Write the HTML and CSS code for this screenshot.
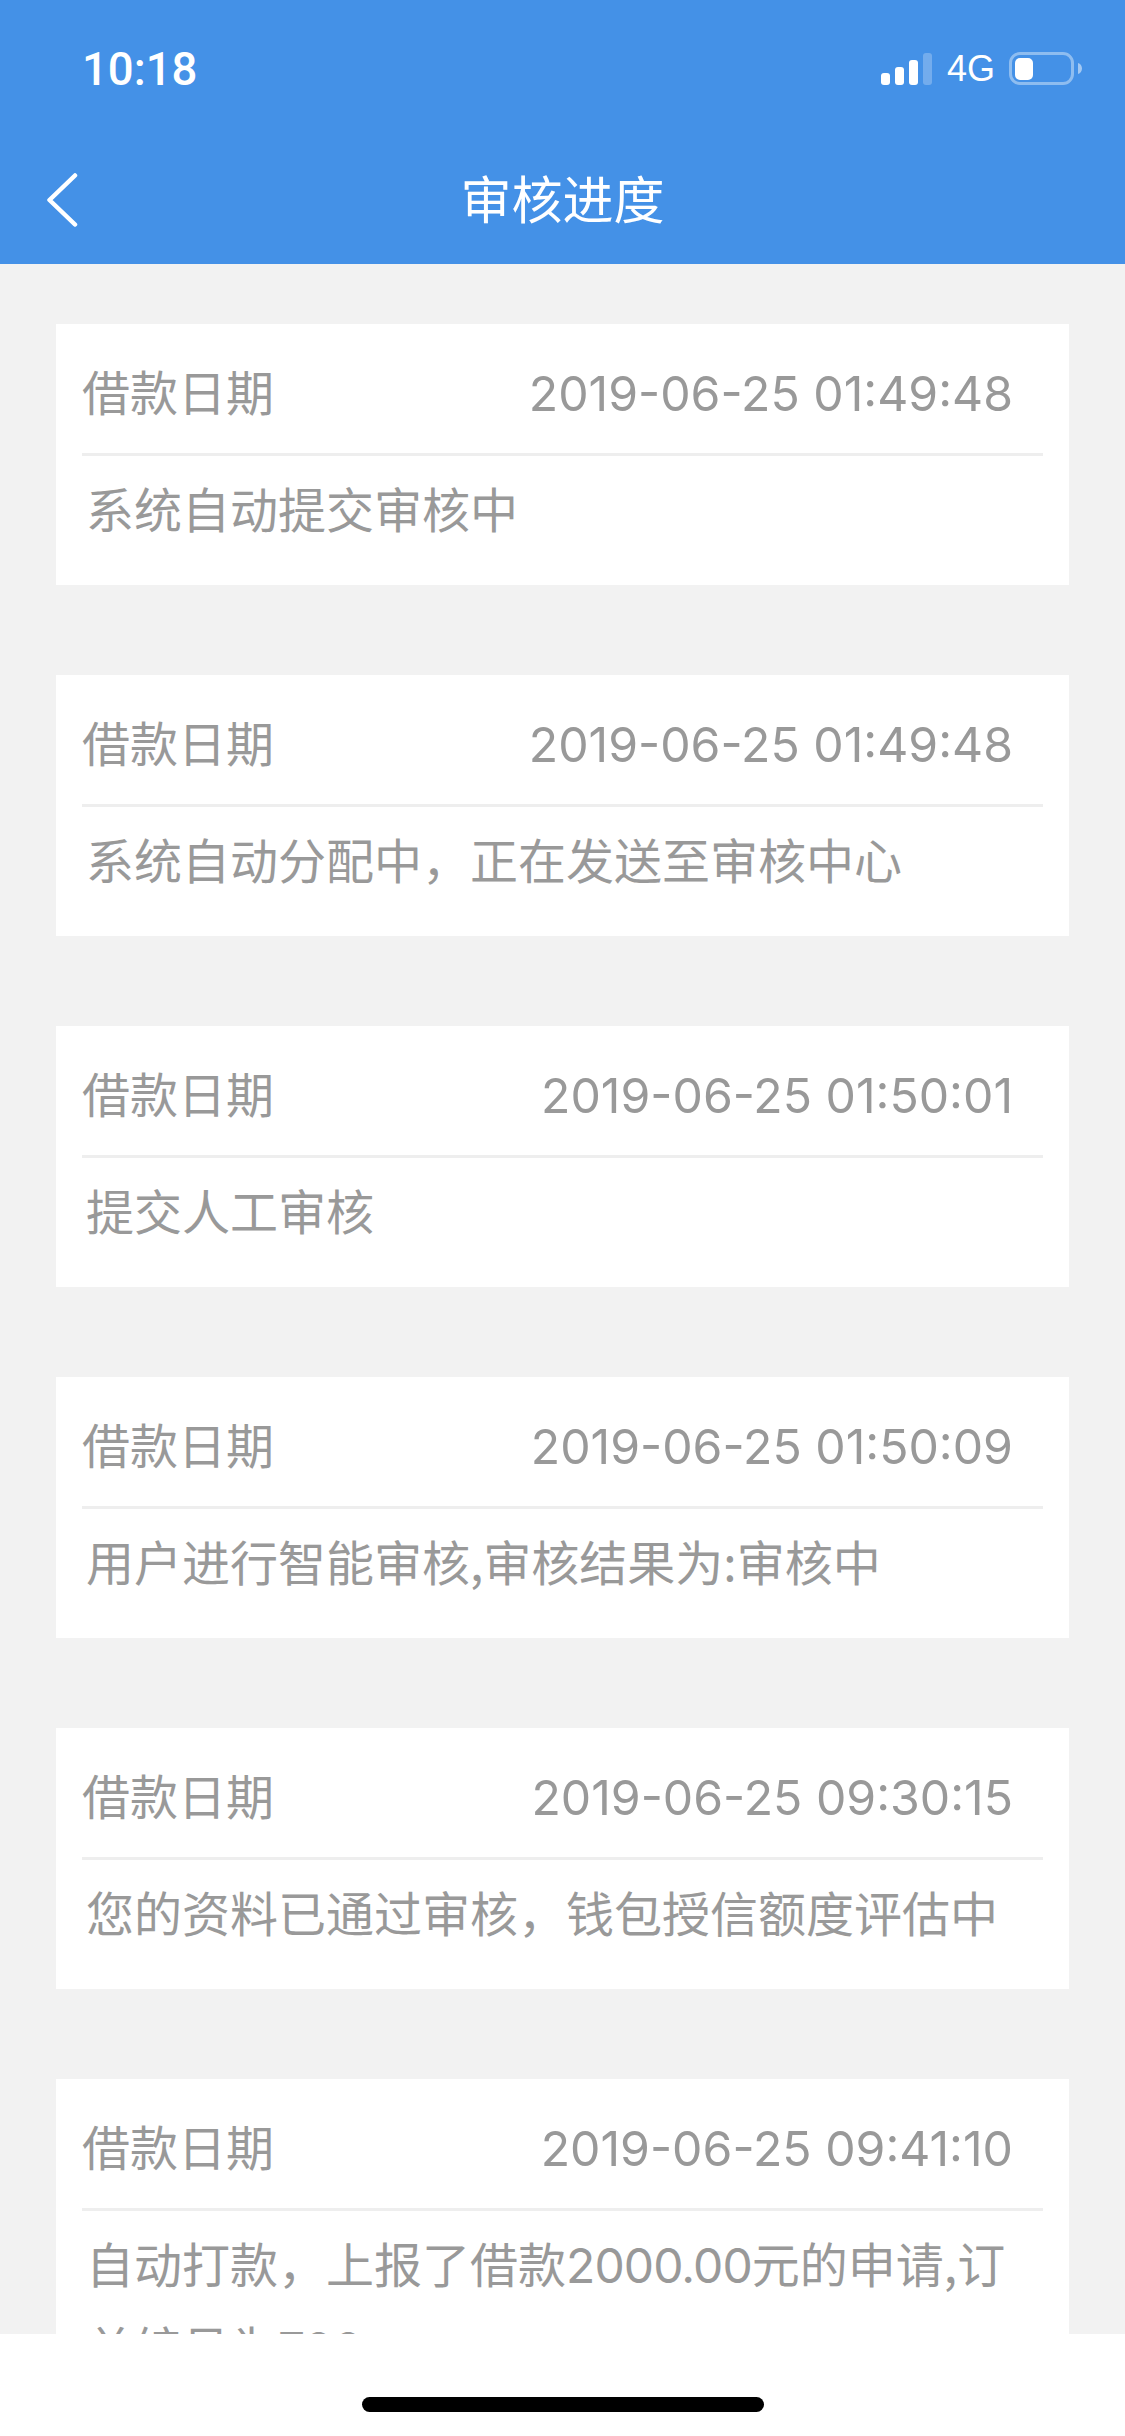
FILE: index.html
```html
<!DOCTYPE html>
<html lang="zh-CN">
<head>
<meta charset="utf-8">
<title>审核进度</title>
<link rel="stylesheet" href="styles.css">
</head>
<body>
<div class="screen">
  <header class="header">
    <div class="status">
      <span class="time">10:18</span>
      <div class="status-right">
        <div class="signal">
          <i class="bar b1"></i><i class="bar b2"></i><i class="bar b3"></i><i class="bar b4"></i>
        </div>
        <span class="net">4G</span>
        <svg class="battery" width="73" height="33" viewBox="0 0 73 33">
          <rect x="1.5" y="1.5" width="62" height="30" rx="9.5" fill="none" stroke="#fff" stroke-opacity=".4" stroke-width="3"/>
          <rect x="6" y="6" width="18" height="22" rx="5" fill="#fff"/>
          <path d="M69 11c2.500.8 4 3 4 5.500s-1.500 4.700-4 5.500z" fill="#fff" fill-opacity=".5"/>
        </svg>
      </div>
    </div>
    <div class="nav">
      <svg class="back" width="32" height="54" viewBox="0 0 32 54">
        <path d="M29 2.500 3.500 27 29 51.500" fill="none" stroke="#fff" stroke-width="4.500" stroke-linecap="round" stroke-linejoin="round"/>
      </svg>
      <h1 class="title">审核进度</h1>
    </div>
  </header>
  <main class="list">
    <section class="card">
      <div class="row"><span class="label">借款日期</span><span class="date">2019-06-25 01:49:48</span></div>
      <p class="desc">系统自动提交审核中</p>
    </section>
    <section class="card">
      <div class="row"><span class="label">借款日期</span><span class="date">2019-06-25 01:49:48</span></div>
      <p class="desc">系统自动分配中，正在发送至审核中心</p>
    </section>
    <section class="card">
      <div class="row"><span class="label">借款日期</span><span class="date">2019-06-25 01:50:01</span></div>
      <p class="desc">提交人工审核</p>
    </section>
    <section class="card">
      <div class="row"><span class="label">借款日期</span><span class="date">2019-06-25 01:50:09</span></div>
      <p class="desc">用户进行智能审核,审核结果为:审核中</p>
    </section>
    <section class="card">
      <div class="row"><span class="label">借款日期</span><span class="date">2019-06-25 09:30:15</span></div>
      <p class="desc">您的资料已通过审核，钱包授信额度评估中</p>
    </section>
    <section class="card">
      <div class="row"><span class="label">借款日期</span><span class="date">2019-06-25 09:41:10</span></div>
      <p class="desc">自动打款，上报了借款<span class="num">2000.00</span>元的申请,订单编号为<span class="num">700</span></p>
    </section>
  </main>
  <footer class="home"><span class="home-bar"></span></footer>
</div>
</body>
</html>
```
FILE: styles.css
```css
* { box-sizing: border-box; }
html, body { margin: 0; padding: 0; }
body {
  width: 1125px;
  height: 2436px;
  overflow: hidden;
  font-family: "Inter", "Noto Sans CJK SC", sans-serif;
}
.screen {
  width: 1125px;
  height: 2436px;
  display: flex;
  flex-direction: column;
  background: #f2f2f2;
}
.header {
  flex: 0 0 264px;
  background: #4491e7;
  color: #fff;
  display: flex;
  flex-direction: column;
}
.status {
  flex: 0 0 135px;
  display: flex;
  justify-content: space-between;
  align-items: flex-start;
  padding: 45px 43px 0 82px;
}
.time {
  font-family: "Roboto", sans-serif;
  font-weight: 500;
  font-size: 45.5px;
  line-height: 50px;
}
.status-right {
  display: flex;
  align-items: flex-end;
  margin-top: 7px;
  height: 33px;
}
.signal {
  display: flex;
  align-items: flex-end;
  gap: 5px;
  height: 33px;
  margin-right: 15px;
}
.bar { display: block; width: 9px; background: #fff; border-radius: 3px; }
.b1 { height: 12px; }
.b2 { height: 18px; }
.b3 { height: 25px; }
.b4 { height: 32px; opacity: .25; }
.net {
  font-family: "Liberation Sans", sans-serif;
  font-size: 36px;
  line-height: 33px;
  margin-right: 14px;
}
.battery { display: block; }
.nav {
  position: relative;
  flex: 1;
  display: flex;
  align-items: center;
  justify-content: center;
}
.back { position: absolute; left: 46px; top: 38px; }
.title {
  margin: 0 0 6px;
  font-family: "Noto Sans CJK SC", sans-serif;
  font-weight: 400;
  font-size: 51px;
  line-height: 70px;
}
.list {
  flex: 1;
  min-height: 0;
  overflow: hidden;
  padding: 60px 56px 0;
  display: flex;
  flex-direction: column;
  gap: 90px;
}
.card {
  flex: 0 0 261px;
  background: #fff;
  padding: 0 26px;
  color: #999;
  font-size: 48px;
}
.row {
  height: 132px;
  display: flex;
  justify-content: space-between;
  align-items: center;
  padding-right: 30px;
  border-bottom: 3px solid #eee;
  padding-top: 8px;
}
.label { font-family: "Noto Sans CJK SC", sans-serif; line-height: 70px; padding-bottom: 6px; }
.date { line-height: 70px; padding-top: 3px; font-size: 48.2px; }
.desc {
  margin: 10.5px 0 0;
  padding: 0 30px 0 4px;
  font-family: "Noto Sans CJK SC", sans-serif;
  line-height: 81px;
}
.num { font-family: "Inter", sans-serif; letter-spacing: -.9px; }
.home {
  flex: 0 0 102px;
  background: #fff;
  display: flex;
  justify-content: center;
  padding-top: 63px;
}
.home-bar { display: block; width: 402px; height: 15px; background: #000; border-radius: 8px; }
```
